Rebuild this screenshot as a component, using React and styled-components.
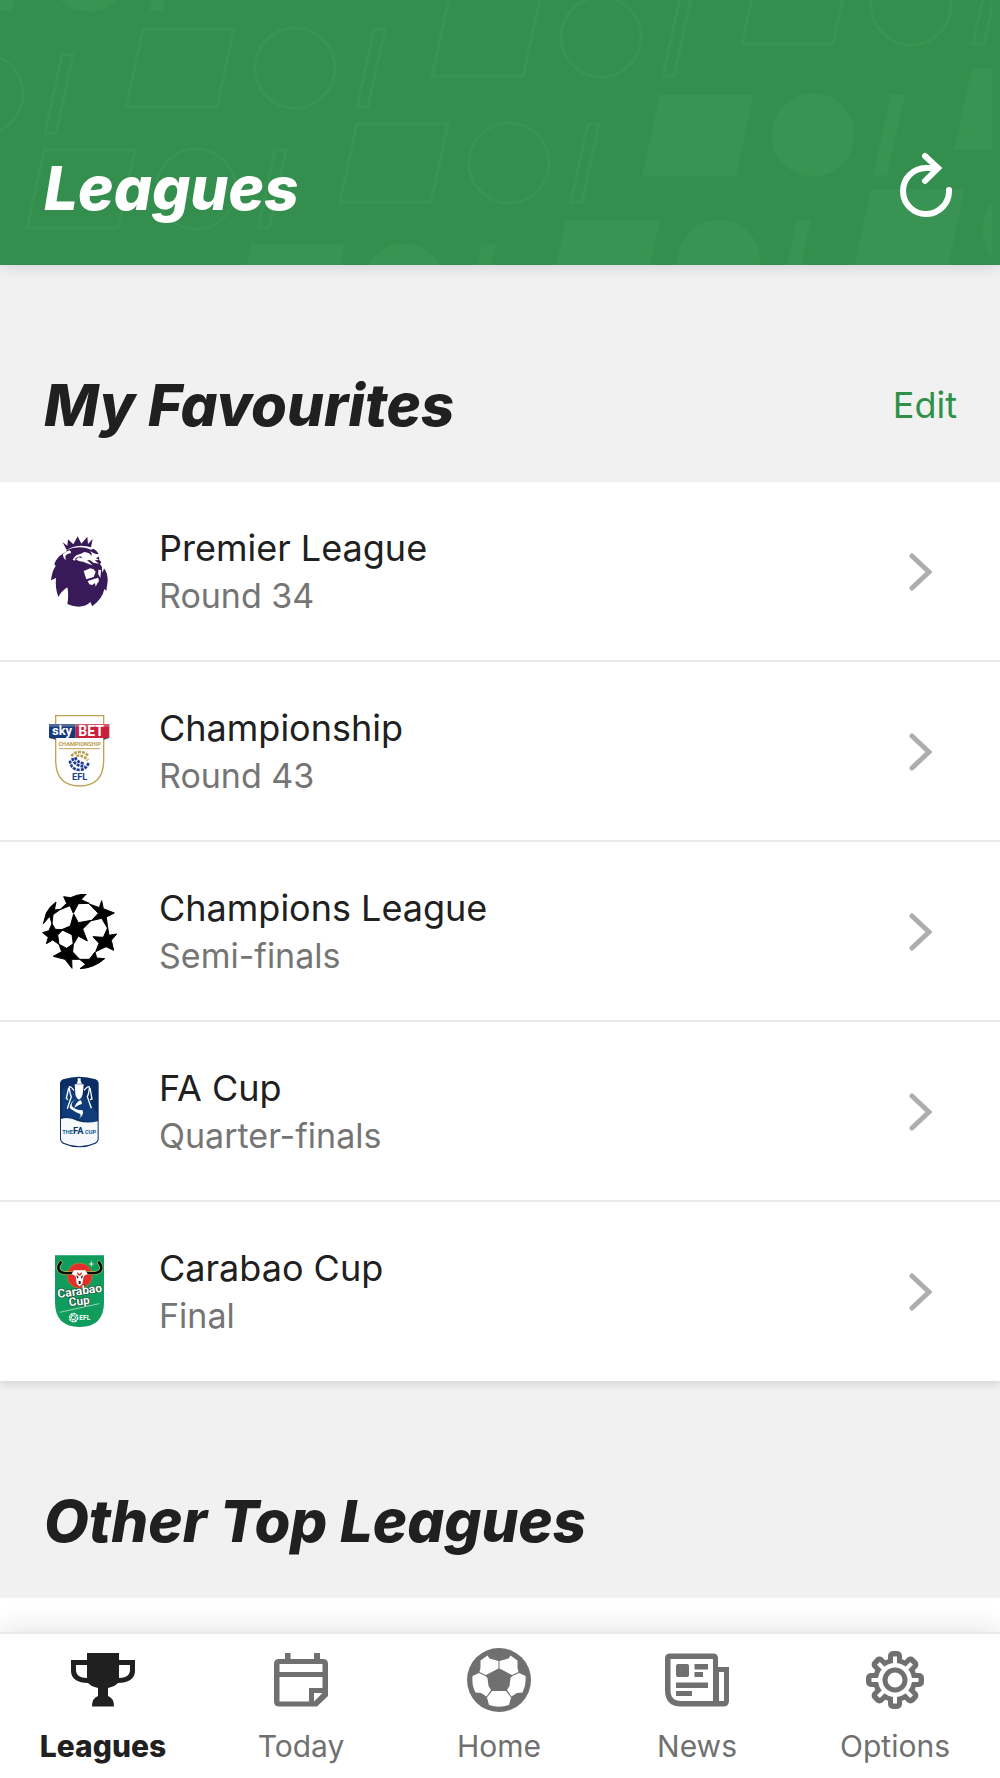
import React, { useState } from "react"
import styled, { createGlobalStyle } from "styled-components"

const leagues = [
    { name: "Premier League", stage: "Round 34", Logo: PremierLogo },
    { name: "Championship", stage: "Round 43", Logo: ChampionshipLogo },
    { name: "Champions League", stage: "Semi-finals", Logo: StarballLogo },
    { name: "FA Cup", stage: "Quarter-finals", Logo: FaCupLogo },
    { name: "Carabao Cup", stage: "Final", Logo: CarabaoLogo },
]

const tabs = [
    { name: "Leagues", Icon: TrophyIcon },
    { name: "Today", Icon: CalendarIcon },
    { name: "Home", Icon: BallIcon },
    { name: "News", Icon: NewsIcon },
    { name: "Options", Icon: GearIcon },
]

export default function App() {
    const [activeTab, setActiveTab] = useState("Leagues")

    return (
        <Screen>
            <GlobalStyle />
            <Header>
                <HeaderPattern />
                <PageTitle>Leagues</PageTitle>
                <RefreshButton type="button" aria-label="Refresh">
                    <svg width="56" height="68" viewBox="0 0 56 68" fill="none" stroke="#ffffff" strokeWidth="6" strokeLinecap="round">
                        <path d="M51 38A23 23 0 1 1 28 16H39M27 4L40 16L27 29" />
                    </svg>
                </RefreshButton>
            </Header>
            <Content>
                <SectionHeader>
                    <SectionTitle>My Favourites</SectionTitle>
                    <EditButton type="button">Edit</EditButton>
                </SectionHeader>
                <LeagueList>
                    {leagues.map(league => <LeagueRow key={league.name} {...league} />)}
                </LeagueList>
                <SectionHeader>
                    <SectionTitle>Other Top Leagues</SectionTitle>
                </SectionHeader>
                <EmptyList />
            </Content>
            <TabBar>
                {tabs.map(({ name, Icon }) => (
                    <Tab key={name} href={`#${name.toLowerCase()}`} $active={name === activeTab} onClick={() => setActiveTab(name)}>
                        <Icon />
                        <span>{name}</span>
                    </Tab>
                ))}
            </TabBar>
        </Screen>
    )
}

function LeagueRow({ name, stage, Logo }) {
    return (
        <Row>
            <RowLink href="#league">
                <Logo />
                <RowText>
                    <LeagueName>{name}</LeagueName>
                    <LeagueStage>{stage}</LeagueStage>
                </RowText>
                <svg width="24" height="40" viewBox="0 0 24 40" fill="none" stroke="#adadad" strokeWidth="5" strokeLinecap="round">
                    <path d="M4 4L21 20L4 36" />
                </svg>
            </RowLink>
        </Row>
    )
}

/* header background: slanted block, circle and bar, repeated */
const outlined = [[-188, 135], [124, 109], [430, 78], [740, 46], [25, 230], [338, 204]]
const filled = [[-82, 11], [642, 176], [954, 150], [233, 326], [548, 302], [853, 271]]

function Motif() {
    return (
        <>
            <path d="M2 -2L19 -80H110L93 -2Z" />
            <circle cx="171" cy="-41" r="40" />
            <path d="M233 -2L250 -80H261L244 -2Z" />
        </>
    )
}

function HeaderPattern() {
    return (
        <Pattern viewBox="0 0 1000 265" preserveAspectRatio="xMinYMin slice" aria-hidden="true">
            <clipPath id="patternEdge"><rect width="992" height="265" /></clipPath>
            <g clipPath="url(#patternEdge)" stroke="#399352" strokeWidth="3">
                {outlined.map(([x, y]) => <g key={`${x}`} fill="none" transform={`translate(${x} ${y})`}><Motif /></g>)}
                {filled.map(([x, y]) => <g key={`${x}`} fill="#399352" transform={`translate(${x} ${y})`}><Motif /></g>)}
            </g>
        </Pattern>
    )
}

function PremierLogo() {
    return (
        <Badge viewBox="36 42 228 228" aria-hidden="true">
            <g fill="#381a58">
                <path d="M98 67L112 77L114 58L130 73L143 49L154 71L172 50L174 72L188 57L183 82Q145 70 110 90Z" />
                <path d="M98 101Q112 96 110 90Q145 74 184 89L190 86Q203 93 207 105L202 103Q210 112 208 120L214 126L210 132Q218 140 216 150L218 158L222 145Q234 160 233 184L229 212L223 207Q218 235 187 259L181 246Q168 260 145 260Q125 259 112 252Q117 225 112 202Q94 214 85 231Q75 204 78 174L63 181Q66 153 77 138L73 132Q80 112 98 101Z" />
            </g>
            <g fill="#ffffff">
                <path d="M101 101Q112 92 119 91Q124 94 123 100Q112 99 106 108L107 121Q100 115 98 103Z" />
                <path d="M128 119Q136 103 153 101L163 96Q180 98 184 108Q188 100 178 91Q193 104 207 103Q210 112 197 114L207 120L194 121L207 131L190 128L181 121L171 120L188 136L170 130Q160 124 149 124L138 119L145 112L158 115L151 109L137 114L135 122Z" />
                <path d="M161 153L181 145Q192 146 197 155L191 171L169 178Z" />
                <path d="M205 149L213 150L211 174L205 163Z" />
                <path d="M173 183L204 173Q210 184 202 190L197 200L195 189L187 195L178 193Z" />
            </g>
            <path d="M128 139Q149 145 184 139" stroke="#381a58" strokeWidth="3" fill="none" />
        </Badge>
    )
}

function ChampionshipLogo() {
    return (
        <Badge viewBox="36 42 228 228" aria-hidden="true">
            <path d="M77 47H221V180Q221 258 149 258Q77 258 77 180Z" fill="#ffffff" stroke="#bda252" strokeWidth="4" />
            <path d="M57 72H137V114H57Z" fill="#173a7b" />
            <path d="M137 72H238V114H137Z" fill="#c71f3e" />
            <path d="M57 72H238V80H57Z" fill="#ffffff" opacity="0.25" />
            <path d="M57 114L77 119V114ZM238 114L221 119V114Z" fill="#31446f" />
            <BadgeText x="66" y="106" fontSize="39" fill="#ffffff">sky</BadgeText>
            <BadgeText x="145" y="109" fontSize="42" fill="#ffffff">BET</BadgeText>
            <BadgeText x="149" y="138" fontSize="17" fill="#b99a45" textAnchor="middle">CHAMPIONSHIP</BadgeText>
            <path d="M87 146H210" stroke="#bda252" strokeWidth="3" />
            <g fill="none" strokeWidth="8" strokeDasharray="9 3">
                <path d="M124 169Q132 157 147 156Q166 155 174 168" stroke="#bda252" />
                <path d="M139 168Q157 163 174 181" stroke="#bda252" />
                <path d="M120 182Q122 209 149 210Q172 208 176 185" stroke="#213d91" />
                <path d="M127 174Q134 200 165 199" stroke="#213d91" />
                <path d="M135 172Q144 190 164 190" stroke="#213d91" />
            </g>
            <BadgeText x="149" y="239" fontSize="28" fill="#203d8f" textAnchor="middle">EFL</BadgeText>
        </Badge>
    )
}

function StarballLogo() {
    return (
        <Badge viewBox="36 42 228 228" aria-hidden="true">
            <g fill="#000000" stroke="#000000" strokeWidth="3" strokeLinejoin="round">
                <path d="M131 102L145 128L184 121L158 147L172 183L145 168L130 193L126 164L95 149L121 138Z" />
                <path d="M101 50L122 53L140 46L170 41L153 59L178 70L145 71L130 100L120 77L90 89L110 70Z" />
                <path d="M215 62L220 86L253 99L229 111L233 145L215 115L184 122L205 100L178 72L208 83Z" />
                <path d="M78 66L73 90L91 88L69 104L66 131L59 109L40 131L49 99L61 81Z" />
                <path d="M38 158L57 152L66 131L76 148L99 149L83 165L87 193L68 180L49 191L55 172Z" />
                <path d="M70 229L95 215L87 193L110 205L130 191L128 216L149 238L125 238L126 265L105 238Z" />
                <path d="M260 162L244 181L251 211L228 200L197 215L207 190L189 170L220 172L233 143L237 166Z" />
                <path d="M149 238L178 238L195 216L200 234L224 236Q192 264 150 266L167 253Z" />
            </g>
        </Badge>
    )
}

function FaCupLogo() {
    return (
        <Badge viewBox="36 42 228 228" aria-hidden="true">
            <path d="M90 69Q91 61 99 58Q148 42 197 58Q205 61 206 69V238Q205 247 197 251Q148 273 99 251Q91 247 90 238Z" fill="#0a2e63" />
            <path d="M96 88Q145 72 201 160V190L96 168Z" fill="#14478a" opacity="0.6" />
            <path d="M93 177Q115 169 143 183Q172 192 203 184V237Q203 244 195 248Q148 269 101 248Q93 244 93 237Z" fill="#f6f8fb" />
            <g fill="#ffffff">
                <path d="M143 55H152V64L156 71H140L143 64Z" />
                <path d="M134 73H161L158 103Q154 116 147 119Q138 115 136 102Z" />
                <path d="M139 118Q125 124 125 137Q132 149 158 151Q163 167 145 177Q157 167 149 161Q126 151 119 143Q122 124 139 118Z" />
                <path d="M151 120Q158 128 155 132Q146 134 133 143Q137 128 151 120Z" />
            </g>
            <g fill="none" stroke="#ffffff" strokeWidth="4">
                <path d="M132 91Q113 68 119 93Q121 105 124 110L112 146" />
                <path d="M162 91Q183 68 177 93Q175 105 172 110L184 145" />
                <path d="M116 84L109 115L114 119M180 84L186 117L180 119" />
            </g>
            <BadgeText x="97" y="222" fontSize="17" fill="#0b5a96">THE</BadgeText>
            <BadgeText x="129" y="222" fontSize="28" fill="#09396f">FA</BadgeText>
            <BadgeText x="165" y="222" fontSize="17" fill="#0b5a96">CUP</BadgeText>
        </Badge>
    )
}

function CarabaoLogo() {
    return (
        <Badge viewBox="36 42 228 228" aria-hidden="true">
            <path d="M75 46H222V187Q222 261 149 261Q75 261 75 187Z" fill="#109c5d" />
            <circle cx="149" cy="107" r="38" fill="#e52e29" stroke="#86a33b" strokeWidth="2" />
            <path d="M174 72L182 70L184 60L186 70L194 72L186 74L184 82L182 74Z" fill="#d6e9be" />
            <path d="M92 67Q77 87 94 97Q112 103 140 96H158Q187 103 205 97Q222 87 207 67" fill="none" stroke="#d9d95c" strokeWidth="11" strokeLinecap="round" />
            <path d="M92 67Q77 87 94 97Q112 103 140 96H158Q187 103 205 97Q222 87 207 67" fill="none" stroke="#090b08" strokeWidth="8" strokeLinecap="round" />
            <path d="M132 91H166L173 101L161 109L157 132L149 139L140 132L137 109L125 101Z" fill="#ffffff" />
            <path d="M139 105L146 111L142 116ZM159 105L152 111L156 116ZM146 123H152V132H146Z" fill="#191919" />
            <path d="M142 95L149 102L155 95V104L149 108L142 104Z" fill="#df4236" />
            <g fill="#ffffff" stroke="#164c35" strokeWidth="4" paintOrder="stroke">
                <BadgeText x="84" y="174" fontSize="36" transform="rotate(-8 84 174)">Carabao</BadgeText>
                <BadgeText x="118" y="199" fontSize="35" transform="rotate(-7 118 199)">Cup</BadgeText>
            </g>
            <path d="M89 217L208 191" stroke="#d6ede2" strokeWidth="2" />
            <circle cx="131" cy="233" r="12" fill="none" stroke="#ffffff" strokeWidth="5" strokeDasharray="7 2" />
            <path d="M123 229L130 226L137 231L134 239L126 238Z" fill="none" stroke="#ffffff" strokeWidth="3" />
            <BadgeText x="148" y="241" fontSize="20" fill="#ffffff">EFL</BadgeText>
        </Badge>
    )
}

function TrophyIcon() {
    return (
        <TabIcon viewBox="0 0 64 64" fillRule="evenodd">
            <path d="M16 5H48V12H64V23C64 31 57 35 47 35C45 37 42 39 37 40V48Q43 50 43 58.5H21Q21 50 27 48V40C22 39 19 37 17 35C7 35 0 31 0 23V12H16ZM16 17H5V22C5 27 9 30 16 30ZM48 17V30C55 30 59 27 59 22V17Z" />
        </TabIcon>
    )
}

function CalendarIcon() {
    return (
        <TabIcon viewBox="0 0 64 64" fillRule="evenodd">
            <path d="M16 5H21.5V11H45V5H51V11H54Q59 11 59 16V48L48 58.5H10Q5 58.5 5 53.5V16Q5 11 10 11H16ZM10.5 16V24H53.5V16ZM10.5 29V53.5H40V40H53.5V29ZM45 45V53.5L53.5 45Z" />
        </TabIcon>
    )
}

function BallIcon() {
    return (
        <TabIcon viewBox="0 0 64 64">
            <circle cx="32" cy="32" r="32" />
            <g fill="#ffffff">
                <path d="M20.5 7.5L13.5 12.5V20L12.5 24L19 27L31.5 20.5V13L22.5 10.5Z" />
                <path d="M43.5 7.5L50.5 12.5V20L51.5 24L45 27L32.5 20.5V13L41.5 10.5Z" />
                <path d="M5.5 28L12 25L18.5 28L20.5 30L21.5 38L24 42L19.5 48.5L14 45L8.5 44.5Q4.5 37 5.5 28Z" />
                <path d="M58.5 28L52 25L45.5 28L43.5 30L42.5 38L40 42L44.5 48.5L50 45L55.5 44.5Q59.5 37 58.5 28Z" />
                <path d="M25 43H39L44 49.5L42 57Q32 60.5 22 57L20 49.5Z" />
            </g>
            <path d="M32 21.5L42.5 27L39 41.5L37.5 42.5H26.5L25 41.5L21.5 27Z" />
        </TabIcon>
    )
}

function NewsIcon() {
    return (
        <TabIcon viewBox="0 0 64 64" fillRule="evenodd">
            <path d="M5 5.5H48Q53 5.5 53 10.5V19H64V53Q64 58.5 58 58.5H16Q0 58.5 0 42V10.5Q0 5.5 5 5.5ZM5.5 11V42Q5.5 53 16 53H48V11ZM54 24V53H59V24Z" />
            <rect x="11" y="16" width="13" height="13" rx="2" />
            <path d="M29.5 16H43V21.5H29.5ZM29.5 24H38V29H29.5ZM11 34.5H43V40H11ZM11 43H27V48H11Z" />
        </TabIcon>
    )
}

const teeth = [0, 45, 90, 135, 180, 225, 270, 315]

function GearIcon() {
    return (
        <TabIcon viewBox="0 0 64 64">
            <circle cx="32" cy="32" r="22" />
            {teeth.map(angle => <rect key={angle} x="25" y="3" width="14" height="24" rx="5" transform={`rotate(${angle} 32 32)`} />)}
            <g fill="#ffffff">
                <circle cx="32" cy="32" r="17" />
                {teeth.map(angle => <rect key={angle} x="30" y="8.5" width="4" height="12" transform={`rotate(${angle} 32 32)`} />)}
            </g>
            <circle cx="32" cy="32" r="10" fill="#ffffff" stroke="currentColor" strokeWidth="5" />
        </TabIcon>
    )
}

const GlobalStyle = createGlobalStyle`
    *{
        box-sizing: border-box;
    }

    body{
        margin: 0;
        font-family: 'Inter', 'Liberation Sans', sans-serif;
        background: #F1F1F1;
        color: #202020;
    }

    button{
        padding: 0;
        border: none;
        background: none;
        font-family: inherit;
        cursor: pointer;
    }

    a{
        color: inherit;
        text-decoration: none;
    }
    `
const Screen = styled.div`
    display: flex;
    flex-direction: column;
    height: 100vh;
    overflow: hidden;
    `
const Header = styled.header`
    position: relative;
    z-index: 1;
    flex-shrink: 0;
    display: flex;
    justify-content: space-between;
    align-items: flex-end;
    padding: 152px 46px 40px 44px;
    background: #348F4F;
    box-shadow: 0 4px 12px rgba(0, 0, 0, 0.1);
    `
const Pattern = styled.svg`
    position: absolute;
    inset: 0;
    z-index: -1;
    width: 100%;
    height: 100%;
    `
const PageTitle = styled.h1`
    margin: 0;
    font-style: italic;
    font-weight: 800;
    font-size: 60px;
    line-height: 73px;
    color: #FFFFFF;
    `
const RefreshButton = styled.button`
    display: flex;
    padding-bottom: 5px;
    `
const Content = styled.main`
    flex: 1;
    min-height: 0;
    display: flex;
    flex-direction: column;
    overflow: hidden;
    `
const SectionHeader = styled.div`
    flex-shrink: 0;
    display: flex;
    justify-content: space-between;
    align-items: center;
    padding: 108px 43px 45px 44px;
    `
const SectionTitle = styled.h2`
    margin: 0;
    font-style: italic;
    font-weight: 800;
    font-size: 58px;
    line-height: 64px;
    `
const EditButton = styled.button`
    font-size: 36px;
    line-height: 48px;
    color: #2F9149;
    `
const LeagueList = styled.ul`
    flex-shrink: 0;
    margin: 0;
    padding: 0;
    list-style: none;
    background: #FFFFFF;
    box-shadow: 0 4px 8px rgba(0, 0, 0, 0.1);
    `
const EmptyList = styled.div`
    flex: 1;
    background: #FFFFFF;
    `
const Row = styled.li`
    height: 180px;
    border-bottom: 2px solid #E9E9E9;

    &:last-child{
        height: 179px;
        border-bottom: none;
    }
    `
const RowLink = styled.a`
    display: flex;
    align-items: center;
    height: 180px;
    padding: 0 68px 0 42px;
    `
const Badge = styled.svg`
    flex-shrink: 0;
    width: 76px;
    height: 76px;
    margin-right: 41px;
    `
const BadgeText = styled.text`
    font-family: 'Roboto', 'Liberation Sans', sans-serif;
    font-weight: 700;
    `
const RowText = styled.div`
    flex: 1;
    display: flex;
    flex-direction: column;
    `
const LeagueName = styled.span`
    font-size: 36px;
    line-height: 48px;
    `
const LeagueStage = styled.span`
    font-size: 34px;
    line-height: 48px;
    color: #757575;
    `
const TabBar = styled.nav`
    position: relative;
    z-index: 1;
    flex-shrink: 0;
    display: grid;
    grid-template-columns: repeat(5, 1fr);
    padding: 14px 6px 14px 4px;
    background: #FFFFFF;
    border-top: 2px solid #E9E9E9;
    box-shadow: 0 -4px 24px rgba(0, 0, 0, 0.1);
    `
const Tab = styled.a`
    display: flex;
    flex-direction: column;
    align-items: center;
    gap: 16px;
    font-size: 30px;
    line-height: 36px;
    font-weight: ${(props) => props.$active ? 800 : 400};
    color: ${(props) => props.$active ? "#202020" : "#707070"};
    `
const TabIcon = styled.svg`
    width: 64px;
    height: 64px;
    fill: currentColor;
    `
